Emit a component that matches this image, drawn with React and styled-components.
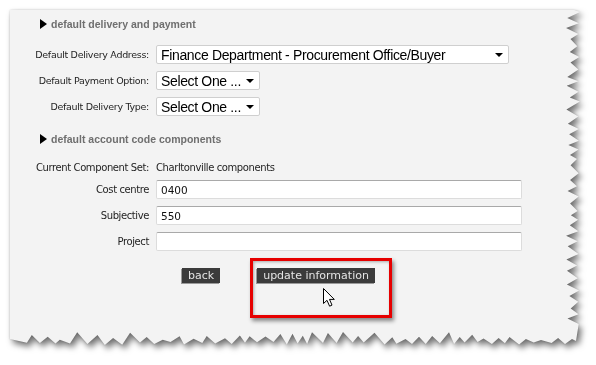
import React from "react";
import styled, { createGlobalStyle } from "styled-components";

const GlobalStyle = createGlobalStyle`
  html, body {
    margin: 0;
    padding: 0;
    background: #ffffff;
  }
  body {
    width: 596px;
    height: 365px;
    overflow: hidden;
    font-family: "DejaVu Sans", Verdana, sans-serif;
  }
`;

// torn paper outline, built once
const PAPER_W = 570;
const PAPER_H = 335;

const makeRand = (seed) => () => {
  seed = (seed * 16807) % 2147483647;
  return seed / 2147483647;
};

const tornEdge = (() => {
  const r = makeRand(42);
  const pts = ["0px 0px", `${PAPER_W - 6}px 0px`];
  let y = 2;
  let tip = true;
  while (y < PAPER_H - 14) {
    const x = tip ? PAPER_W - r() * 3 : PAPER_W - 9 - r() * 5;
    pts.push(`${x.toFixed(1)}px ${y.toFixed(1)}px`);
    y += 4 + r() * 4;
    tip = !tip;
  }
  pts.push(`${PAPER_W - 4}px ${PAPER_H - 4}px`);
  let x = PAPER_W - 8;
  tip = false;
  while (x > 8) {
    const yy = tip ? PAPER_H - r() * 3 : PAPER_H - 5 - r() * 8;
    pts.push(`${x.toFixed(1)}px ${yy.toFixed(1)}px`);
    x -= 4 + r() * 7;
    tip = !tip;
  }
  pts.push(`0px ${PAPER_H - 6}px`);
  return `polygon(${pts.join(", ")})`;
})();

const App = () => {
  return (
    <>
      <GlobalStyle />
      <Sheet>
        <Paper>
          <SectionHead>
            <Caret />
            default delivery and payment
          </SectionHead>

          <FormGrid $rows="repeat(3, 19px)" $top={14}>
            <Label>Default Delivery Address:</Label>
            <SelectBox $width={353}>
              <SelectText>Finance Department - Procurement Office/Buyer</SelectText>
              <SelectArrow />
            </SelectBox>
            <Label>Default Payment Option:</Label>
            <SelectBox $width={104}>
              <SelectText>Select One ...</SelectText>
              <SelectArrow />
            </SelectBox>
            <Label>Default Delivery Type:</Label>
            <SelectBox $width={104}>
              <SelectText>Select One ...</SelectText>
              <SelectArrow />
            </SelectBox>
          </FormGrid>

          <SectionHead $top={16}>
            <Caret />
            default account code components
          </SectionHead>

          <FormGrid $rows="11px repeat(3, 19px)" $top={16}>
            <Label $big>Current Component Set:</Label>
            <Value>Charltonville components</Value>
            <Label $big>Cost centre</Label>
            <TextInput defaultValue="0400" />
            <Label $big>Subjective</Label>
            <TextInput defaultValue="550" />
            <Label $big>Project</Label>
            <TextInput defaultValue="" />
          </FormGrid>

          <ButtonRow>
            <DarkButton>back</DarkButton>
            <DarkButton>update information</DarkButton>
          </ButtonRow>

          <Highlight />
          <Pointer width="13" height="19" viewBox="0 0 13 19">
            <path
              d="M0.5 0.5 L0.5 15.5 L4 12.3 L6.6 18.2 L9 17.1 L6.5 11.4 L11.3 11.4 Z"
              fill="#ffffff"
              stroke="#000000"
              strokeWidth="1"
              strokeLinejoin="miter"
            />
          </Pointer>
        </Paper>
      </Sheet>
    </>
  );
};

const Sheet = styled.div`
  padding: 10px 0 0 10px;
  filter: drop-shadow(0 0 1px rgba(0, 0, 0, 0.18))
    drop-shadow(3px 4px 3px rgba(0, 0, 0, 0.55));
`;

const Paper = styled.div`
  position: relative;
  box-sizing: border-box;
  width: ${PAPER_W}px;
  height: ${PAPER_H}px;
  padding: 7px 0 0 20px;
  background: #f3f3f3;
  clip-path: ${tornEdge};
`;

const SectionHead = styled.div`
  display: flex;
  align-items: center;
  gap: 4px;
  height: 14px;
  margin-top: ${(p) => p.$top || 0}px;
  padding-left: 10px;
  font-family: "Liberation Sans", Arial, sans-serif;
  font-weight: bold;
  font-size: 10.5px;
  color: #6f6f6f;
`;

const Caret = styled.span`
  width: 0;
  height: 0;
  border-top: 5px solid transparent;
  border-bottom: 5px solid transparent;
  border-left: 7px solid #000000;
`;

const FormGrid = styled.div`
  display: grid;
  grid-template-columns: 119px 1fr;
  grid-template-rows: ${(p) => p.$rows};
  column-gap: 7px;
  row-gap: 7px;
  margin-top: ${(p) => p.$top}px;
  align-items: center;
`;

const Label = styled.div`
  text-align: right;
  white-space: nowrap;
  font-family: "DejaVu Sans", Verdana, sans-serif;
  font-size: ${(p) => (p.$big ? "10px" : "9.5px")};
  letter-spacing: ${(p) => (p.$big ? "-0.4px" : "-0.3px")};
  color: #1e1e1e;
`;

const Value = styled(Label)`
  text-align: left;
  font-size: 10px;
  letter-spacing: -0.4px;
`;

const SelectBox = styled.div`
  box-sizing: border-box;
  display: flex;
  align-items: center;
  justify-content: space-between;
  width: ${(p) => p.$width}px;
  height: 19px;
  padding: 0 5px 0 4px;
  background: #ffffff;
  border: 1px solid #cfcfcf;
  border-radius: 2px;
`;

const SelectText = styled.span`
  font-family: "Liberation Sans", Arial, sans-serif;
  font-size: 14px;
  letter-spacing: -0.35px;
  color: #000000;
  white-space: nowrap;
`;

const SelectArrow = styled.span`
  flex-shrink: 0;
  width: 0;
  height: 0;
  border-left: 4px solid transparent;
  border-right: 4px solid transparent;
  border-top: 4px solid #000000;
`;

const TextInput = styled.input`
  box-sizing: border-box;
  width: 366px;
  height: 19px;
  margin: 0;
  padding: 0 4px;
  background: #ffffff;
  border: 1px solid #dcdcdc;
  border-top-color: #a9a9a9;
  border-radius: 2px;
  outline: none;
  font-family: "DejaVu Sans", Verdana, sans-serif;
  font-size: 10.5px;
  color: #111111;
`;

const ButtonRow = styled.div`
  display: flex;
  gap: 37px;
  margin: 17px 0 0 152px;
`;

const DarkButton = styled.button`
  height: 15px;
  margin: 0;
  padding: 0 6px;
  background: #3b3b3b;
  border: none;
  border-radius: 0;
  box-shadow: -1px 1px 0 #9a9a9a;
  font-family: "DejaVu Sans", Verdana, sans-serif;
  font-size: 11px;
  line-height: 15px;
  color: #e4e4e4;
`;

const Highlight = styled.div`
  position: absolute;
  left: 240px;
  top: 248px;
  width: 142px;
  height: 60px;
  box-sizing: border-box;
  border: 3px solid #e60000;
  box-shadow: 2px 3px 4px rgba(0, 0, 0, 0.45),
    inset 1px 1px 3px rgba(0, 0, 0, 0.3);
`;

const Pointer = styled.svg`
  position: absolute;
  left: 313px;
  top: 278px;
`;

export default App;
